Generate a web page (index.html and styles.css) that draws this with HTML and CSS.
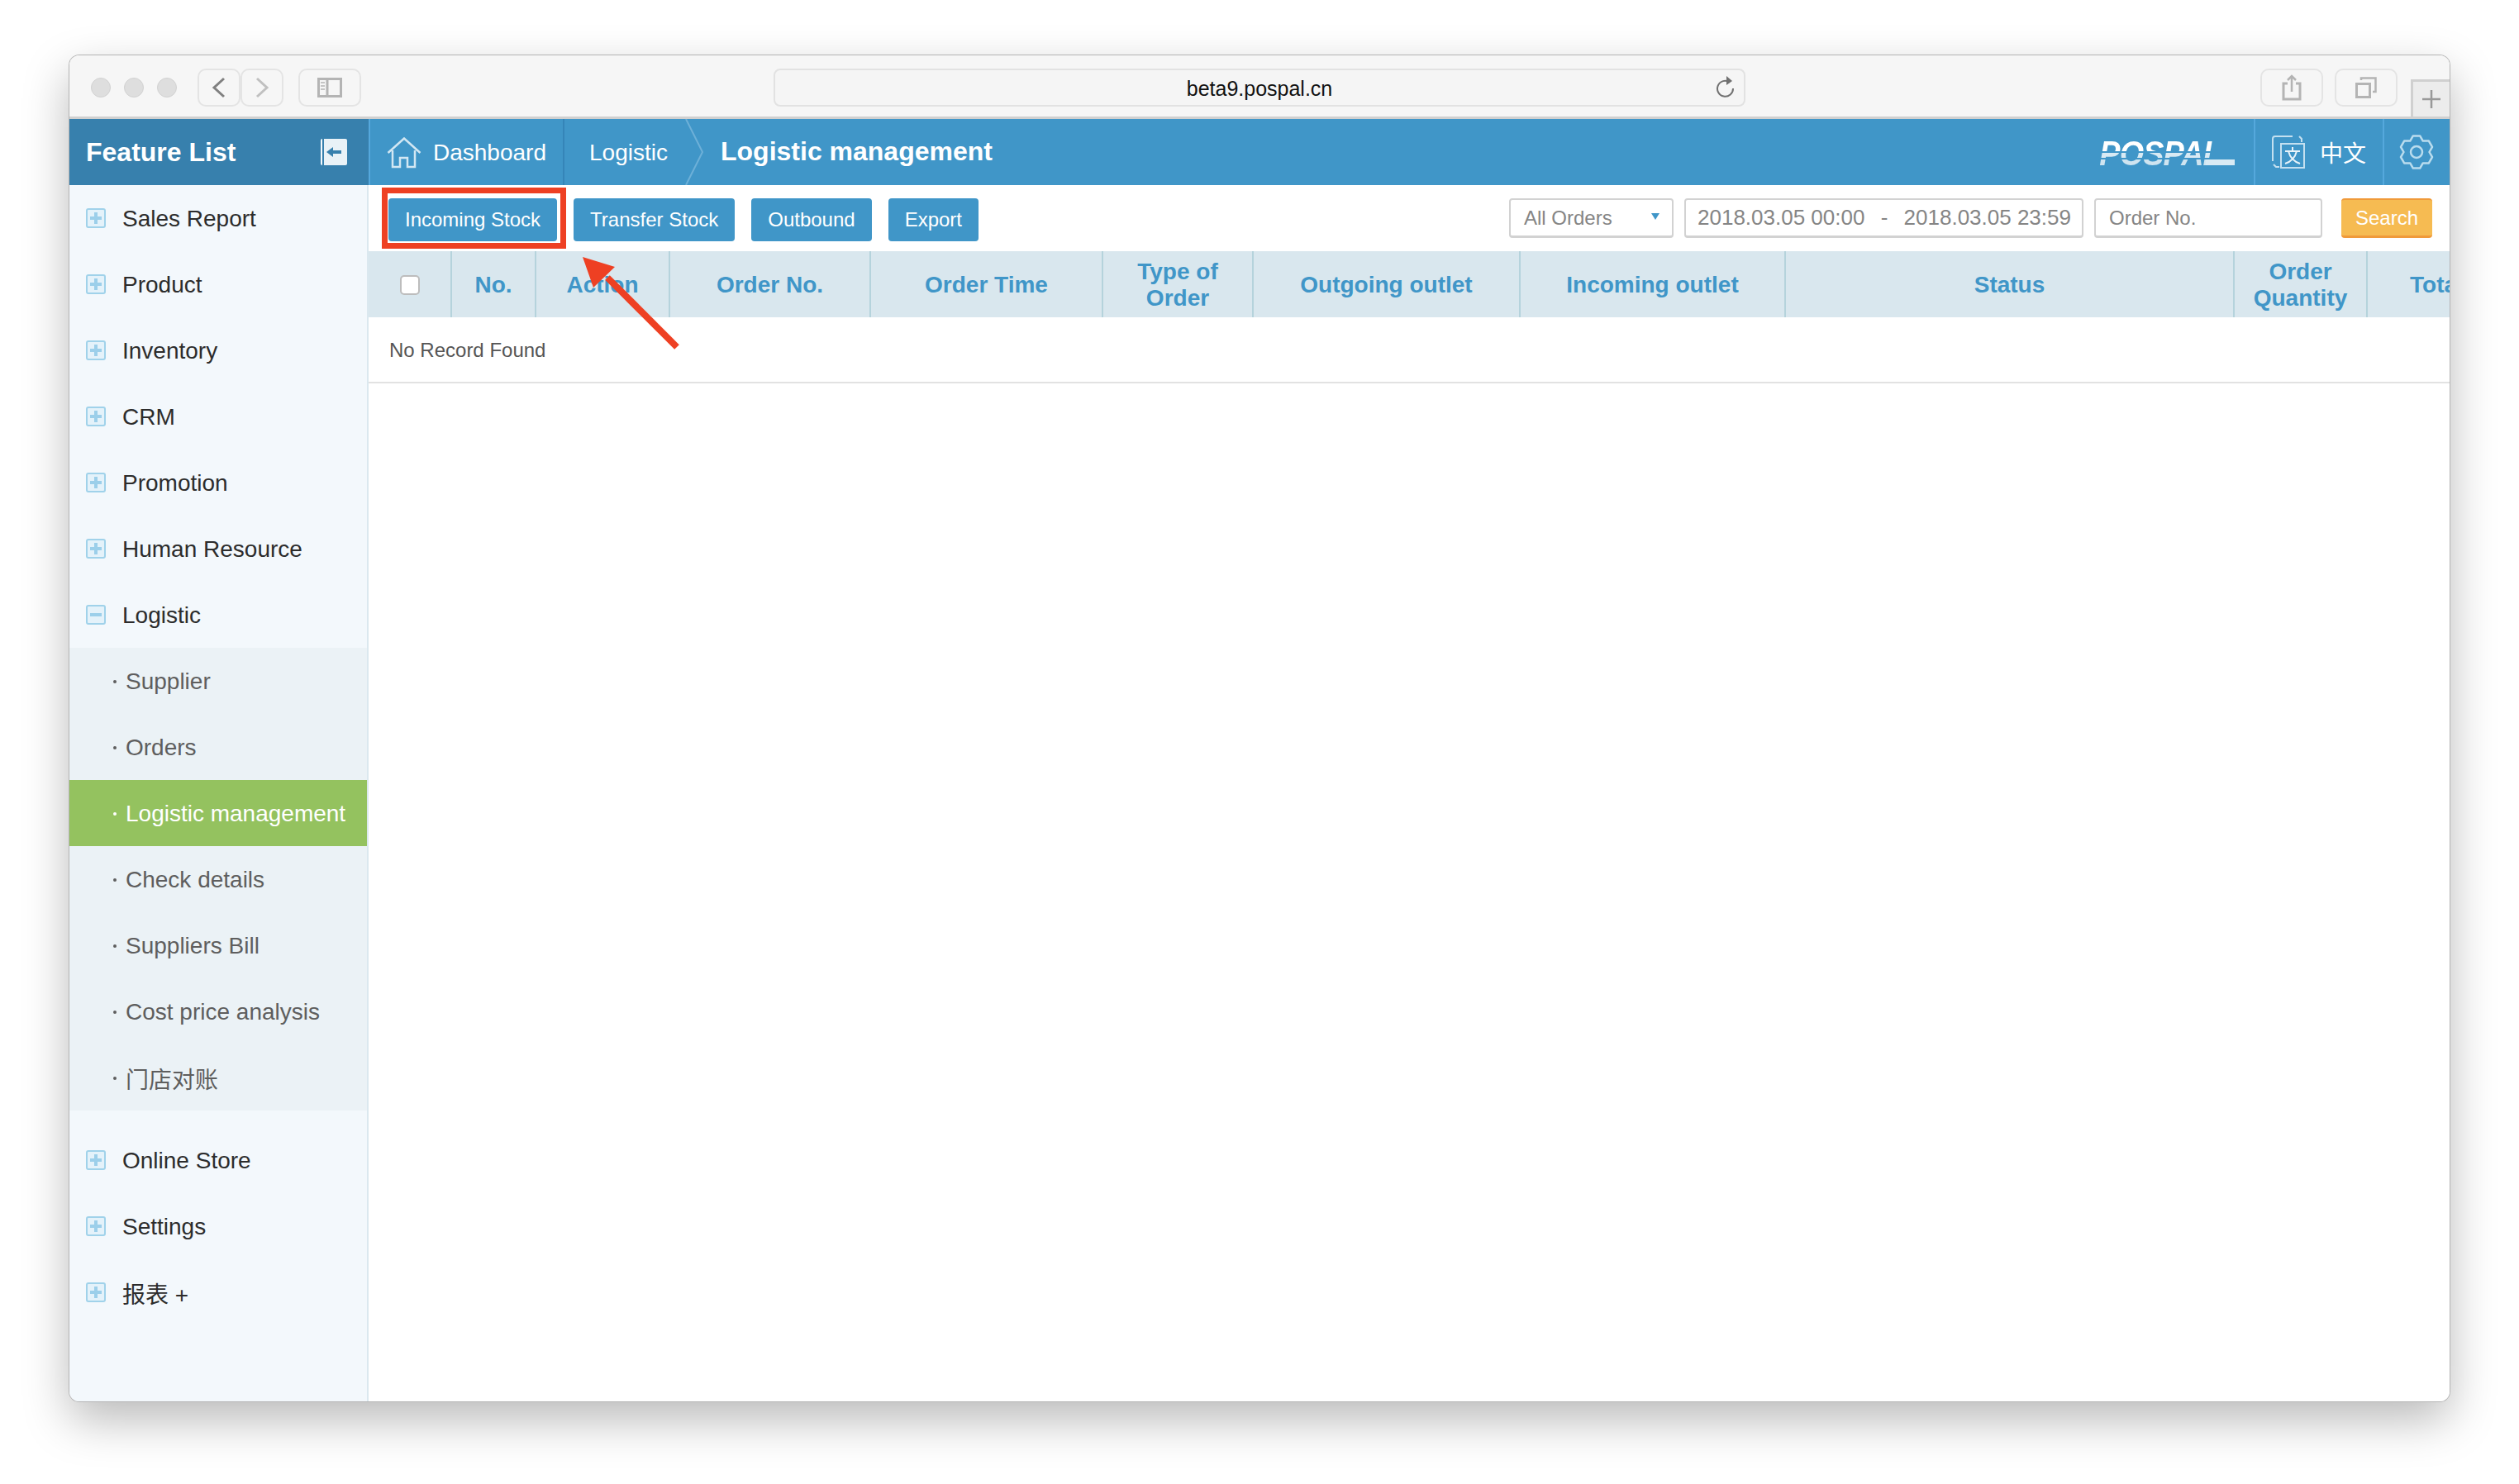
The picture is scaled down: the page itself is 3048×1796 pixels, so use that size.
FILE: index.html
```html
<!DOCTYPE html>
<html lang="en">
<head>
<meta charset="utf-8">
<title>Logistic management</title>
<link rel="stylesheet" href="styles.css">
</head>
<body>
<div class="window">
  <div class="chrome">
    <div class="lights"><i></i><i></i><i></i></div>
    <div class="nav-group">
      <div class="cbtn nav"><svg width="22" height="26" viewBox="0 0 22 26"><path d="M17 2 5 13l12 11" class="ic-dark"/></svg></div>
      <div class="cbtn nav"><svg width="22" height="26" viewBox="0 0 22 26"><path d="M5 2l12 11L5 24" class="ic-light"/></svg></div>
    </div>
    <div class="cbtn sidebtn"><svg width="30" height="24" viewBox="0 0 30 24"><path d="M1.500 1.500h27v21h-27zM12 1.500v21" class="ic-mid"/><path d="M4 6h5M4 10h5M4 14h5" class="ic-thin"/></svg></div>
    <div class="urlbar">
      <span class="url">beta9.pospal.cn</span>
      <svg class="reload" width="24" height="28" viewBox="0 0 24 28"><path d="M17 8.500A9.500 9.500 0 1 0 21 16" class="ic-reload"/><path d="M13 1l7 6-7 5z" fill="#707070"/></svg>
    </div>
    <div class="cbtn sqbtn share"><svg width="24" height="32" viewBox="0 0 24 32"><path d="M7 11H2v19h20V11h-5" class="ic-mid"/><path d="M12 21V2M7 7l5-5 5 5" class="ic-thin2"/></svg></div>
    <div class="cbtn sqbtn tabs"><svg width="26" height="26" viewBox="0 0 26 26"><path d="M1.500 8.500h16v16h-16z" class="ic-mid"/><path d="M7 4V1.500h17.500V18H21" class="ic-thin2"/></svg></div>
    <div class="newtab"><svg width="24" height="24" viewBox="0 0 24 24"><path d="M12 1v22M1 12h22" class="ic-plus"/></svg></div>
  </div>

  <div class="app">
    <aside class="sidebar">
      <div class="side-head">
        <span class="side-title">Feature List</span>
        <span class="collapse"><svg width="18" height="12" viewBox="0 0 18 12"><path d="M18 6H6" class="ic-arrow"/><path d="M0 6l8-6v12z" fill="#3780ad"/></svg></span>
      </div>
      <ul class="menu">
        <li class="item"><span class="tog plus"></span>Sales Report</li>
        <li class="item"><span class="tog plus"></span>Product</li>
        <li class="item"><span class="tog plus"></span>Inventory</li>
        <li class="item"><span class="tog plus"></span>CRM</li>
        <li class="item"><span class="tog plus"></span>Promotion</li>
        <li class="item"><span class="tog plus"></span>Human Resource</li>
        <li class="item"><span class="tog"></span>Logistic</li>
        <li class="sub">
          <div class="subitem">Supplier</div>
          <div class="subitem">Orders</div>
          <div class="subitem active">Logistic management</div>
          <div class="subitem">Check details</div>
          <div class="subitem">Suppliers Bill</div>
          <div class="subitem">Cost price analysis</div>
          <div class="subitem">门店对账</div>
        </li>
        <li class="item"><span class="tog plus"></span>Online Store</li>
        <li class="item"><span class="tog plus"></span>Settings</li>
        <li class="item"><span class="tog plus"></span>报表 +</li>
      </ul>
    </aside>

    <main class="main">
      <header class="topbar">
        <div class="crumb home">
          <svg width="42" height="38" viewBox="0 0 42 38"><path d="M1.500 19 21 1.500 40.500 19M7 16v20h9V25h9v11h9V16" class="ic-home"/></svg>
          Dashboard
        </div>
        <div class="crumb logi">Logistic</div>
        <svg class="chev" width="24" height="80" viewBox="0 0 24 80"><path d="M1 0l20 40L1 80" class="ic-chev"/></svg>
        <div class="page-title">Logistic management</div>
        <div class="logo">POSPAL</div>
        <div class="lang">
          <svg width="42" height="42" viewBox="0 0 42 42"><path d="M26 2H5a3 3 0 0 0-3 3v27M3 36l3 3h4M34 2l3 3v4" class="ic-lang"/><path d="M12 11h28v29H12z" class="ic-lang"/><path d="M26 15v4M17 20h18M21 20c2 8 8 13 14 15M31 20c-2 8-8 13-14 15" class="ic-lang-t"/></svg>
          <span>中文</span>
        </div>
        <div class="gear">
          <svg width="44" height="44" viewBox="-22 -22 44 44"><polygon points="-4.160,-19.560 4.160,-19.560 7.750,-13.420 14.860,-13.380 19.020,-6.180 15.500,0 19.020,6.180 14.860,13.380 7.750,13.420 4.160,19.560 -4.160,19.560 -7.750,13.420 -14.860,13.380 -19.020,6.180 -15.500,0 -19.020,-6.180 -14.860,-13.380 -7.750,-13.420" class="ic-gear"/><circle r="7" class="ic-gear"/></svg>
        </div>
      </header>

      <div class="toolbar">
        <button class="btn">Incoming Stock</button>
        <button class="btn">Transfer Stock</button>
        <button class="btn">Outbound</button>
        <button class="btn">Export</button>
        <div class="filters">
          <div class="field select">All Orders<i class="caret"></i></div>
          <div class="field date"><span>2018.03.05 00:00</span><span>-</span><span>2018.03.05 23:59</span></div>
          <div class="field orderno">Order No.</div>
          <button class="search">Search</button>
        </div>
      </div>

      <div class="table">
        <div class="thead">
          <div class="th"><span class="check"></span></div>
          <div class="th">No.</div>
          <div class="th">Action</div>
          <div class="th">Order No.</div>
          <div class="th">Order Time</div>
          <div class="th">Type of<br>Order</div>
          <div class="th">Outgoing outlet</div>
          <div class="th">Incoming outlet</div>
          <div class="th">Status</div>
          <div class="th">Order<br>Quantity</div>
          <div class="th">Total</div>
        </div>
        <div class="empty">No Record Found</div>
      </div>
    </main>
  </div>

  <div class="redbox"></div>
  <svg class="arrow" width="130" height="125" viewBox="0 0 130 125"><path d="M114 109 30 25" class="ic-red"/><polygon points="0,0 39,12 13,37" fill="#ee4023"/></svg>
</div>
</body>
</html>
```
FILE: styles.css
```css
* { box-sizing: border-box; }
html, body { margin: 0; padding: 0; background: #fff; }
body {
  width: 3048px;
  height: 1796px;
  padding: 67px 84px 0;
  overflow: hidden;
  font-family: "Liberation Sans", "Noto Sans CJK SC", sans-serif;
}
.window {
  position: relative;
  width: 2880px;
  height: 1629px;
  border-radius: 12px;
  background: #fff;
  overflow: visible;
  box-shadow: 0 0 0 1px #b4b4b4, 0 22px 56px rgba(0, 0, 0, .28);
  display: flex;
  flex-direction: column;
}

/* browser chrome */
.chrome {
  height: 77px;
  flex: none;
  display: flex;
  align-items: flex-start;
  padding: 16px 0 0 26px;
  background: #f6f6f6;
  border-bottom: 3px solid #d0d0d0;
  border-radius: 12px 12px 0 0;
}
.lights { display: flex; gap: 16px; margin-top: 11px; }
.lights i {
  width: 24px; height: 24px; border-radius: 50%;
  background: #dedede; border: 1px solid #d2d2d2;
}
.cbtn {
  height: 46px;
  display: flex; align-items: center; justify-content: center;
  border: 2px solid #e4e4e4;
  border-radius: 10px;
  background: #f6f6f6;
}
.nav-group { display: flex; margin-left: 25px; }
.nav { width: 52px; }
.sidebtn { width: 76px; margin-left: 18px; }
.urlbar {
  position: relative;
  width: 1176px; height: 46px;
  margin-left: 499px;
  display: flex; align-items: center; justify-content: center;
  background: #f5f5f5;
  border: 2px solid #e2e2e2;
  border-radius: 8px;
}
.url { font-size: 25px; color: #111; margin-top: 2px; }
.reload { position: absolute; right: 10px; top: 6px; }
.sqbtn { width: 76px; }
.share { margin-left: 623px; }
.tabs { margin-left: 14px; }
.newtab {
  width: 47px; height: 45px;
  margin: 13px 0 0 16px;
  display: flex; align-items: center; justify-content: center;
  background: #ececec;
  border: solid #d0d0d0;
  border-width: 3px 0 0 3px;
}
.ic-dark { fill: none; stroke: #808080; stroke-width: 3; }
.ic-light { fill: none; stroke: #c0c0c0; stroke-width: 3; }
.ic-mid { fill: none; stroke: #b4b4b4; stroke-width: 3; }
.ic-thin { fill: none; stroke: #c4c4c4; stroke-width: 2; }
.ic-thin2 { fill: none; stroke: #b4b4b4; stroke-width: 2.500; }
.ic-plus { fill: none; stroke: #999; stroke-width: 2.500; }
.ic-reload { fill: none; stroke: #707070; stroke-width: 2; }

/* app shell */
.app { flex: 1; display: flex; min-height: 0; border-radius: 0 0 12px 12px; overflow: hidden; }
.sidebar {
  width: 362px;
  flex: none;
  background: #f3f8fc;
  border-right: 2px solid #dbe8ef;
}
.side-head {
  height: 80px;
  margin-right: -2px;
  padding: 0 26px 0 20px;
  display: flex; align-items: center; justify-content: space-between;
  background: #3780ad;
}
.side-title { font-size: 32px; font-weight: 700; color: #fff; }
.collapse {
  width: 32px; height: 32px;
  display: flex; align-items: center; justify-content: center;
  background: linear-gradient(90deg, #f4f9fc 0 2px, #3780ad 2px 4px, #e9f2f7 4px);
  border-radius: 2px;
}
.ic-arrow { fill: none; stroke: #3780ad; stroke-width: 4; }
.menu { list-style: none; margin: 0; padding: 0; }
.item {
  height: 80px;
  padding: 2px 0 0 20px;
  display: flex; align-items: center; gap: 20px;
  font-size: 28px; color: #2c2c2c;
}
.tog {
  position: relative;
  top: -1px;
  flex: none;
  width: 24px; height: 24px;
  background: #e4f2fa;
  border: 2px solid #a0d2ea;
  border-radius: 3px;
}
.tog::before {
  content: "";
  position: absolute; left: 3px; right: 3px; top: 8px; height: 4px;
  background: #9ccfea;
}
.tog.plus::after {
  content: "";
  position: absolute; top: 3px; bottom: 3px; left: 8px; width: 4px;
  background: #9ccfea;
}
.sub { background: #ebf2f6; margin-bottom: 20px; }
.subitem {
  height: 80px;
  padding: 2px 0 0 53px;
  display: flex; align-items: center;
  font-size: 28px; color: #5e5e5e;
}
.subitem::before {
  content: "";
  width: 4px; height: 4px;
  margin-right: 11px;
  background: currentColor;
  border-radius: 50%;
}
.subitem.active { background: #94c25f; color: #fff; }

/* main */
.main { flex: 1; min-width: 0; display: flex; flex-direction: column; background: #fff; }
.topbar {
  height: 80px; flex: none;
  display: flex; align-items: center;
  background: #4096c8;
  color: #fff;
  border-left: 2px solid #55a8dc;
}
.crumb { height: 80px; padding-top: 1px; display: flex; align-items: center; font-size: 28px; }
.home { width: 235px; padding-left: 20px; gap: 14px; border-right: 2px solid #3585b8; }
.logi { width: 146px; padding-left: 30px; }
.chev { flex: none; }
.ic-chev { fill: none; stroke: #6db0d8; stroke-width: 2; }
.ic-home { fill: none; stroke: #d2e7f3; stroke-width: 2.500; }
.page-title { margin: -1px 0 0 19px; font-size: 32px; font-weight: 700; }
.logo {
  position: relative;
  margin-left: auto;
  margin-right: 23px;
  width: 186px; height: 31px;
  font-size: 43px; line-height: 32px;
  font-weight: 700; font-style: italic;
  letter-spacing: -1px;
  color: transparent;
  background: linear-gradient(180deg, #fff 0 46%, #4096c8 46% 52%, #d8eaf4 52% 72%, #4096c8 72% 76%, #cfe4f0 76%);
  -webkit-background-clip: text;
  background-clip: text;
  transform: scaleX(.88);
  transform-origin: right center;
}
.logo::after {
  content: "";
  position: absolute; right: 0; bottom: 0;
  width: 40px; height: 7px;
  background: #d8eaf4;
}
.lang {
  width: 156px; height: 80px; flex: none;
  display: flex; align-items: center; gap: 17px;
  padding-left: 19px;
  border-left: 2px solid #55a8dc;
  font-size: 28px;
}
.ic-lang { fill: none; stroke: #c4e0f0; stroke-width: 2; }
.ic-lang-t { fill: none; stroke: #e8f3f9; stroke-width: 2; }
.gear {
  width: 81px; height: 80px; flex: none;
  display: flex; align-items: center; padding-left: 17px;
  border-left: 2px solid #55a8dc;
}
.ic-gear { fill: none; stroke: #b9dcee; stroke-width: 2.500; stroke-linejoin: round; }

/* toolbar */
.toolbar {
  height: 80px; flex: none;
  display: flex; align-items: flex-start; gap: 20px;
  padding: 16px 21px 0 24px;
}
.btn {
  height: 52px;
  padding: 0 20px;
  border: 0;
  border-radius: 4px;
  background: #4096c8;
  color: #fff;
  font: 24px "Liberation Sans", sans-serif;
}
.filters { margin-left: auto; display: flex; gap: 13px; }
.field {
  position: relative;
  height: 48px;
  display: flex; align-items: center;
  background: #fff;
  border: 2px solid #d2d2d2;
  border-bottom-width: 3px;
  border-radius: 4px;
  color: #858585;
  font-size: 24px;
}
.select { width: 199px; padding-left: 16px; }
.caret {
  position: absolute; right: 15px; top: 16px;
  border-top: 8px solid #4096c8;
  border-left: 5px solid transparent;
  border-right: 5px solid transparent;
}
.date {
  width: 483px; padding: 0 13px 0 14px;
  justify-content: space-between;
  font-size: 26px;
}
.orderno { width: 276px; padding-left: 16px; }
.search {
  width: 110px; height: 48px;
  margin-left: 10px;
  border: solid #f09a3a;
  border-width: 2px 0 3px;
  border-radius: 4px;
  background: #f6bb52;
  color: #fff;
  font: 24px "Liberation Sans", sans-serif;
}

/* table */
.table { flex: 1; min-width: 0; overflow: hidden; }
.thead {
  height: 80px;
  width: 2586px;
  display: grid;
  grid-template-columns: 101px 102px 162px 243px 281px 182px 323px 321px 543px 161px 167px;
  background: #d9e7ee;
}
.th {
  display: flex; align-items: center; justify-content: center;
  text-align: center;
  padding-top: 1px;
  border-right: 2px solid #b5d3dc;
  font-size: 28px; line-height: 32px; font-weight: 700;
  color: #4096c8;
}
.th:last-child { border-right: 0; }
.check {
  width: 24px; height: 24px;
  background: #fff;
  border: 2px solid #bdbdbd;
  border-radius: 5px;
}
.empty {
  height: 80px;
  padding: 1px 0 0 25px;
  display: flex; align-items: center;
  border-bottom: 2px solid #e2e2e2;
  font-size: 24px; color: #555;
}

/* annotations over the page */
.redbox {
  position: absolute;
  left: 378px; top: 160px;
  width: 223px; height: 74px;
  border: 7px solid #ee4023;
}
.arrow { position: absolute; left: 621px; top: 244px; }
.ic-red { fill: none; stroke: #ee4023; stroke-width: 8; }
```
